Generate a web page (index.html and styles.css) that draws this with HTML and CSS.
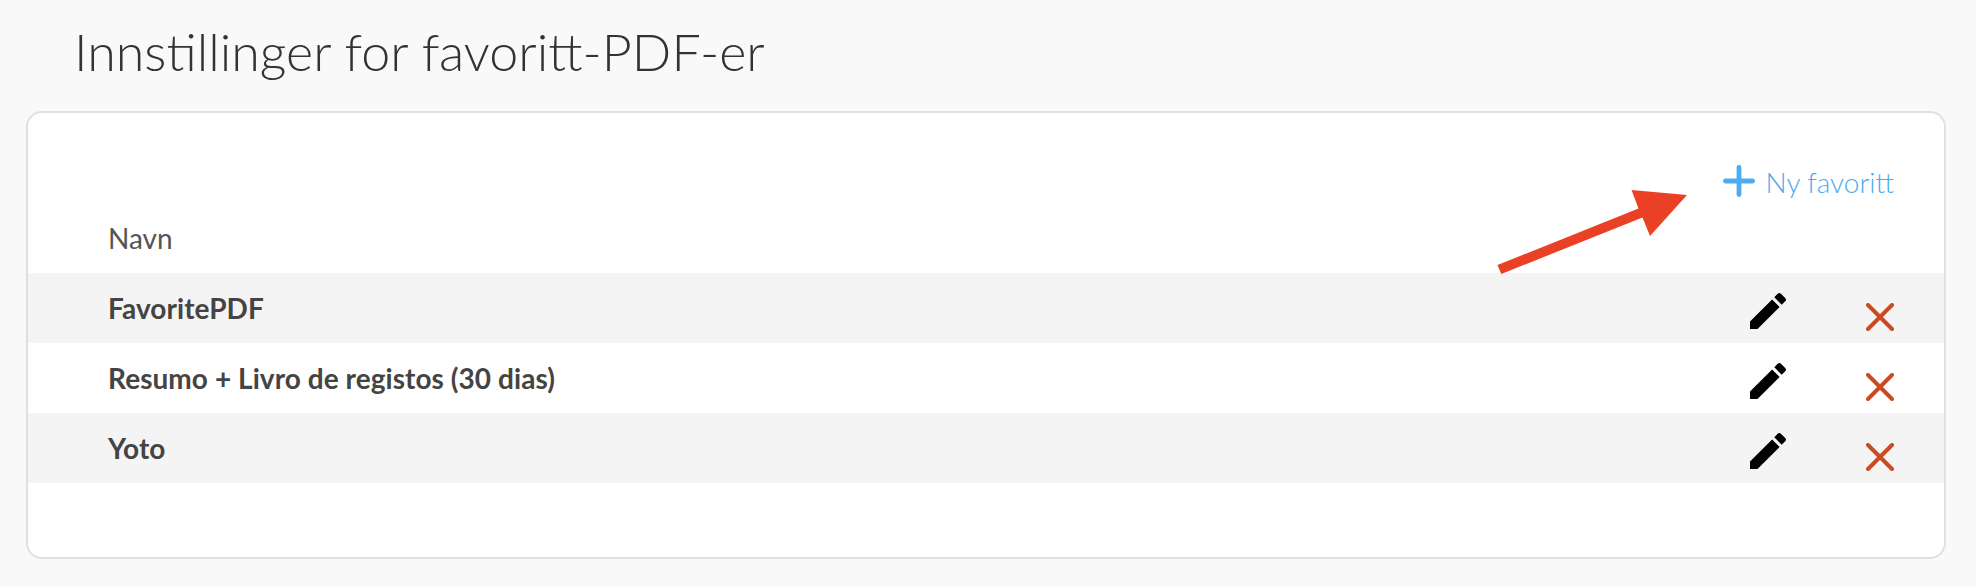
FILE: index.html
```html
<!DOCTYPE html>
<html lang="no">
<head>
    <meta charset="UTF-8">
    <meta name="viewport" content="width=device-width, initial-scale=1.0">
    <title>Innstillinger for favoritt-PDF-er</title>
    <link rel="stylesheet" href="styles.css">
</head>
<body>
    <!-- icons used in every row -->
    <svg class="sprite">
        <symbol id="edit" viewBox="0 0 24 24">
            <path d="M3 17.25V21h3.75L17.81 9.94l-3.75-3.75L3 17.25zM20.71 7.04c.39-.39.39-1.02 0-1.41l-2.34-2.34c-.39-.39-1.02-.39-1.41 0l-1.83 1.83 3.75 3.75 1.83-1.83z"/>
        </symbol>
        <symbol id="remove" viewBox="0 0 28 28">
            <path d="M2 2L26 26M26 2L2 26"/>
        </symbol>
    </svg>

    <h1 class="title">Innstillinger for favoritt-PDF-er</h1>
    <div class="card">
        <div class="toolbar">
            <a class="new">
                <svg class="plus" viewBox="0 0 32 32"><path d="M16 2.4V29.6M2.4 16H29.6"/></svg>
                Ny favoritt
            </a>
        </div>
        <div class="head">Navn</div>
        <div class="row">
            <span class="name">FavoritePDF</span>
            <svg class="edit"><use href="#edit"/></svg>
            <svg class="remove"><use href="#remove"/></svg>
        </div>
        <div class="row">
            <span class="name">Resumo + Livro de registos (30 dias)</span>
            <svg class="edit"><use href="#edit"/></svg>
            <svg class="remove"><use href="#remove"/></svg>
        </div>
        <div class="row">
            <span class="name">Yoto</span>
            <svg class="edit"><use href="#edit"/></svg>
            <svg class="remove"><use href="#remove"/></svg>
        </div>
        <svg class="arrow" viewBox="0 0 190 86"><path d="M0.5 76L141.5 19.5L134.5 1L190 6L153 47L145.5 28.5L4.3 85Z"/></svg>
    </div>
</body>
</html>
```
FILE: styles.css
```css
*{
    margin: 0;
    padding: 0;
    box-sizing: border-box;
}
body{
    background-color: #f9f9f9;
    font-family: Lato, "Liberation Sans", sans-serif;
    font-size: 28px;
    color: #444;
    padding: 0 30px 0 26px;
}
.sprite{
    display: none;
}
.title{
    height: 111px;
    padding: 18px 0 0 48px;
    font-size: 52px;
    font-weight: 300;
    line-height: 66px;
    color: #333;
}
.card{
    position: relative;
    height: 448px;
    padding-top: 50px;
    background-color: #fff;
    border: 2px solid #e0e0e0;
    border-radius: 16px;
}
.toolbar{
    display: flex;
    justify-content: flex-end;
    height: 40px;
    padding-right: 50px;
}
.new{
    display: flex;
    align-items: center;
    gap: 11px;
    padding-bottom: 2px;
    line-height: 38px;
    font-weight: 300;
    color: #4dabef;
}
.plus{
    width: 32px;
    height: 32px;
    margin-bottom: 2px;
    fill: none;
    stroke: #4dabef;
    stroke-width: 4.8;
    stroke-linecap: round;
}
.head{
    height: 70px;
    padding-left: 80px;
    line-height: 70px;
    color: #555;
}
.row{
    display: flex;
    align-items: center;
    height: 70px;
    padding: 0 50px 0 80px;
}
.row:nth-child(odd){
    background-color: #f4f4f4;
}
.name{
    flex: 1;
    font-weight: 700;
    letter-spacing: 0.06px;
}
.edit{
    width: 48px;
    height: 48px;
    margin: 6px 74px 0 0;
    fill: #000;
}
.remove{
    width: 28px;
    height: 28px;
    margin-top: 18px;
    fill: none;
    stroke: #ca4b22;
    stroke-width: 4;
    stroke-linecap: round;
}
/* pointer to the new favourite link */
.arrow{
    position: absolute;
    top: 76px;
    left: 1469px;
    width: 190px;
    height: 86px;
    fill: #ea4025;
}
```
